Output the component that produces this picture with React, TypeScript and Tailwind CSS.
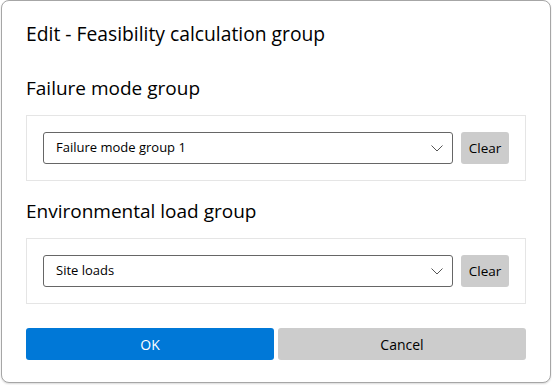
function GroupPicker({ value }: { value: string }) {
  return (
    <div className="flex items-center gap-2 border border-[#e5e5e5] bg-white p-4">
      <div className="flex h-8 flex-1 items-center justify-between rounded-[3px] border border-[#666666] bg-white pl-3 pr-[9px]">
        <span className="text-[13px] text-black">{value}</span>
        <svg width="12" height="7" viewBox="0 0 12 7" fill="none" className="mt-px">
          <path d="M0.5 0.5 L6 6 L11.5 0.5" stroke="#555555" strokeWidth="1" />
        </svg>
      </div>
      <button className="h-8 w-12 rounded-[3px] bg-[#cccccc] text-[13.5px] text-black">
        Clear
      </button>
    </div>
  );
}

export default function App() {
  return (
    <div
      className="h-[385px] w-[552px] bg-white pl-px"
      style={{ fontFamily: '"Open Sans", "Noto Sans", sans-serif' }}
    >
      <div className="flex h-[383px] w-[550px] flex-col rounded-lg border border-[#a6a6a6] bg-white px-6 pt-[19px] shadow-[0_1px_2px_rgba(0,0,0,0.15)]">
        <h1 className="text-[19.3px] leading-[28px] text-black">
          Edit - Feasibility calculation group
        </h1>

        <h2 className="mt-[27px] text-[19px] leading-[26px] text-black">
          Failure mode group
        </h2>
        <div className="mt-[14px]">
          <GroupPicker value="Failure mode group 1" />
        </div>

        <h2 className="mt-[17px] text-[19px] leading-[26px] text-black">
          Environmental load group
        </h2>
        <div className="mt-[14px]">
          <GroupPicker value="Site loads" />
        </div>

        <div className="mt-6 flex gap-1">
          <button className="h-8 flex-1 rounded-[3px] bg-[#0078d7] text-[14px] text-white">
            OK
          </button>
          <button className="h-8 flex-1 rounded-[3px] bg-[#cccccc] text-[14px] text-black">
            Cancel
          </button>
        </div>
      </div>
    </div>
  );
}
